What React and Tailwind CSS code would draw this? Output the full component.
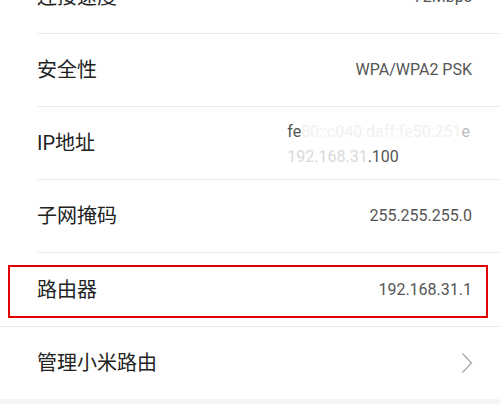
const rows = [
  { label: "连接速度", value: "72Mbps" },
  { label: "安全性", value: "WPA/WPA2 PSK" },
  { label: "IP地址", ip: true },
  { label: "子网掩码", value: "255.255.255.0" },
  { label: "路由器", value: "192.168.31.1", marked: true },
]

function Row({ row, last }) {
  return (
    <div className="relative h-[73px] pl-[37px]">
      <div className={"flex h-full items-center justify-between pr-[28px] " + (last ? "" : "border-b border-[#ebebeb]")}>
        <span className="text-[20px] text-[#222]">{row.label}</span>
        {row.ip ? (
          <div className="flex flex-col text-[16px] leading-[25px] text-[#555] mr-[2px] pt-[1px]">
            <span>
              fe<span className="text-[#f1f1f1]">80::c040:daff:fe50:251</span><span className="text-[#bbb]">e</span>
            </span>
            <span>
              <span className="text-[#d9d9d9]">192.168.31</span>.100
            </span>
          </div>
        ) : (
          <span className="text-[16px] text-[#555]">{row.value}</span>
        )}
      </div>
      {row.marked && (
        <div className="absolute left-[8px] right-[12px] top-[12px] h-[53px] border-2 border-[#e30000]" />
      )}
    </div>
  )
}

export default function App() {
  return (
    <div className="h-[404px] w-[500px] overflow-hidden bg-[#f5f5f5]" style={{ fontFamily: '"Roboto", "Noto Sans CJK SC", sans-serif' }}>
      <div className="-mt-[39px] bg-white">
        {rows.map((r, i) => (
          <Row key={r.label} row={r} last={i === rows.length - 1} />
        ))}
        <div className="border-t border-[#ebebeb]" />
        <div className="flex h-[72px] items-center justify-between pl-[37px] pr-[27px]">
          <span className="text-[20px] text-[#222]">管理小米路由</span>
          <svg width="12" height="22" viewBox="0 0 12 22" fill="none">
            <path d="M1.5 1.5 L10.5 11 L1.5 20.5" stroke="#a8a8a8" strokeWidth="1.3" />
          </svg>
        </div>
      </div>
    </div>
  )
}
